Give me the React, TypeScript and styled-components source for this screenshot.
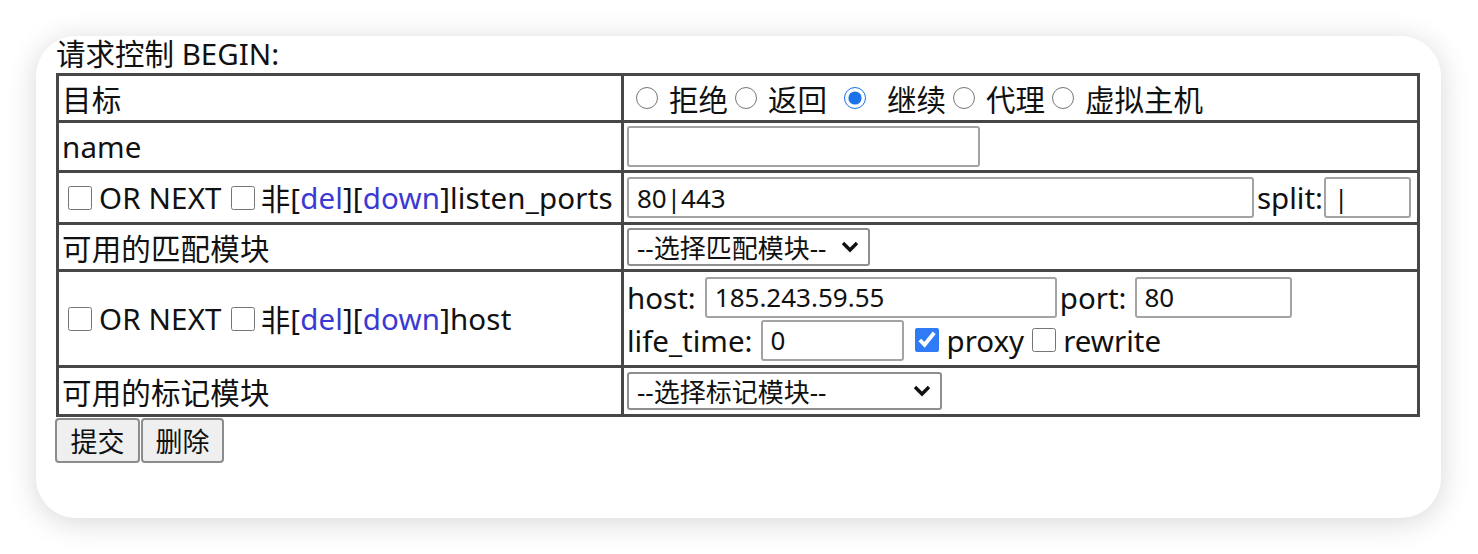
import React from 'react';
import styled, { createGlobalStyle } from 'styled-components';

const GlobalStyle = createGlobalStyle`
  html, body {
    margin: 0;
    padding: 0;
    background: #ffffff;
  }
  body {
    font-family: "Noto Sans", "Noto Sans CJK SC", sans-serif;
    color: #111;
  }
  * {
    box-sizing: border-box;
  }
`;

const LINE = '#474747';

const Page = styled.div`
  width: 1478px;
  height: 554px;
  padding: 36px 37px 36px 36px;
`;

const Card = styled.form`
  width: 1405px;
  height: 482px;
  background: #fff;
  border-radius: 40px;
  box-shadow: 0 4px 30px rgba(0, 0, 0, 0.16);
  padding: 1px 20px 0 20px;
  font-size: 29.5px;
`;

const Title = styled.div`
  height: 36px;
  line-height: 34px;
  white-space: nowrap;
`;

const Grid = styled.table`
  width: 1364px;
  table-layout: fixed;
  border: 3px solid ${LINE};
  border-spacing: 0;

  tr:not(:last-child) > td {
    border-bottom: 3px solid ${LINE};
  }
`;

const Row = styled.tr<{ $h: number }>`
  height: ${(p) => p.$h}px;
`;

const LabelCell = styled.td`
  width: 562px;
  padding: 0 0 0 3px;
  vertical-align: middle;
  white-space: nowrap;
  letter-spacing: 0.15px;
`;

const FieldCell = styled.td`
  width: 796px;
  border-left: 3px solid ${LINE};
  padding: 0 3px;
  vertical-align: middle;
  white-space: nowrap;
`;

const Line = styled.div`
  display: flex;
  align-items: center;
  white-space: nowrap;
`;

const Stack = styled.div`
  display: flex;
  flex-direction: column;
  gap: 2px;
`;

const Option = styled.label<{ $lead: number }>`
  display: inline-flex;
  align-items: center;
  margin-left: ${(p) => p.$lead}px;
`;

const Radio = styled.input.attrs({ type: 'radio', name: 'target' })<{ $after: number }>`
  width: 22px;
  height: 22px;
  margin: 0 ${(p) => p.$after}px 0 0;
  accent-color: #1a73e8;
`;

const Check = styled.input.attrs({ type: 'checkbox' })<{ $before: number; $after: number }>`
  width: 24px;
  height: 24px;
  margin: 0 ${(p) => p.$after}px 0 ${(p) => p.$before}px;
  accent-color: #2f7bf5;
`;

const Link = styled.a`
  color: #3a3ad2;
  text-decoration: none;
`;

const TextInput = styled.input<{ $w: number; $before?: number }>`
  width: ${(p) => p.$w}px;
  height: 41px;
  margin: 0 3px 0 ${(p) => p.$before ?? 0}px;
  padding: 0 8px;
  border: 2px solid #a3a3a3;
  border-radius: 3px;
  font-family: "Noto Sans", "Noto Sans CJK SC", sans-serif;
  font-size: 26px;
  color: #111;
  background: #fff;
  outline: none;
`;

const Picker = styled.select<{ $w: number }>`
  width: ${(p) => p.$w}px;
  height: 38px;
  padding: 0 30px 0 8px;
  border: 2px solid #8f8f8f;
  border-radius: 3px;
  font-family: "Noto Sans", "Noto Sans CJK SC", sans-serif;
  font-size: 26px;
  color: #111;
  background: #fff url("data:image/svg+xml;utf8,<svg xmlns='http://www.w3.org/2000/svg' width='18' height='12' viewBox='0 0 18 12'><path d='M2 2 L9 9 L16 2' fill='none' stroke='%23111' stroke-width='3.4'/></svg>") no-repeat right 9px center;
  appearance: none;
`;

const Actions = styled.div`
  display: flex;
  gap: 1px;
  margin-top: 1px;
  margin-left: -1px;
`;

const Button = styled.button<{ $w: number }>`
  width: ${(p) => p.$w}px;
  height: 45px;
  padding: 0;
  border: 2px solid #8c8c8c;
  border-radius: 4px;
  background: #efefef;
  font-family: "Noto Sans", "Noto Sans CJK SC", sans-serif;
  font-size: 27px;
  color: #111;
`;

function FlagLabel({ name }: { name: string }) {
  return (
    <Line>
      <Check $before={6} $after={7} />
      OR NEXT
      <Check $before={9} $after={6} />
      非[<Link href="#del">del</Link>][<Link href="#down">down</Link>]{name}
    </Line>
  );
}

const targets = [
  { label: '拒绝', lead: 9, after: 11 },
  { label: '返回', lead: 7, after: 11 },
  { label: '继续', lead: 17, after: 21, checked: true },
  { label: '代理', lead: 7, after: 11 },
  { label: '虚拟主机', lead: 7, after: 11 },
];

export default function App() {
  return (
    <Page>
      <GlobalStyle />
      <Card onSubmit={(e) => e.preventDefault()}>
        <Title>请求控制 BEGIN:</Title>
        <Grid>
          <tbody>
            <Row $h={47}>
              <LabelCell>目标</LabelCell>
              <FieldCell>
                <Line>
                  {targets.map((t) => (
                    <Option key={t.label} $lead={t.lead}>
                      <Radio $after={t.after} defaultChecked={t.checked} />
                      {t.label}
                    </Option>
                  ))}
                </Line>
              </FieldCell>
            </Row>
            <Row $h={50}>
              <LabelCell>name</LabelCell>
              <FieldCell>
                <Line>
                  <TextInput $w={353} defaultValue="" />
                </Line>
              </FieldCell>
            </Row>
            <Row $h={52}>
              <LabelCell>
                <FlagLabel name="listen_ports" />
              </LabelCell>
              <FieldCell>
                <Line>
                  <TextInput $w={633} defaultValue="80|443" />
                  split:
                  <TextInput $w={87} $before={1} defaultValue="|" />
                </Line>
              </FieldCell>
            </Row>
            <Row $h={47}>
              <LabelCell>可用的匹配模块</LabelCell>
              <FieldCell>
                <Line>
                  <Picker $w={243} defaultValue="">
                    <option value="">--选择匹配模块--</option>
                  </Picker>
                </Line>
              </FieldCell>
            </Row>
            <Row $h={96}>
              <LabelCell>
                <FlagLabel name="host" />
              </LabelCell>
              <FieldCell>
                <Stack>
                  <Line>
                    host:
                    <TextInput $w={352} $before={9} defaultValue="185.243.59.55" />
                    port:
                    <TextInput $w={157} $before={8} defaultValue="80" />
                  </Line>
                  <Line>
                    life_time:
                    <TextInput $w={143} $before={8} defaultValue="0" />
                    <Check $before={8} $after={8} defaultChecked />
                    proxy
                    <Check $before={8} $after={7} />
                    rewrite
                  </Line>
                </Stack>
              </FieldCell>
            </Row>
            <Row $h={46}>
              <LabelCell>可用的标记模块</LabelCell>
              <FieldCell>
                <Line>
                  <Picker $w={315} defaultValue="">
                    <option value="">--选择标记模块--</option>
                  </Picker>
                </Line>
              </FieldCell>
            </Row>
          </tbody>
        </Grid>
        <Actions>
          <Button type="submit" $w={85}>提交</Button>
          <Button type="button" $w={83}>删除</Button>
        </Actions>
      </Card>
    </Page>
  );
}
